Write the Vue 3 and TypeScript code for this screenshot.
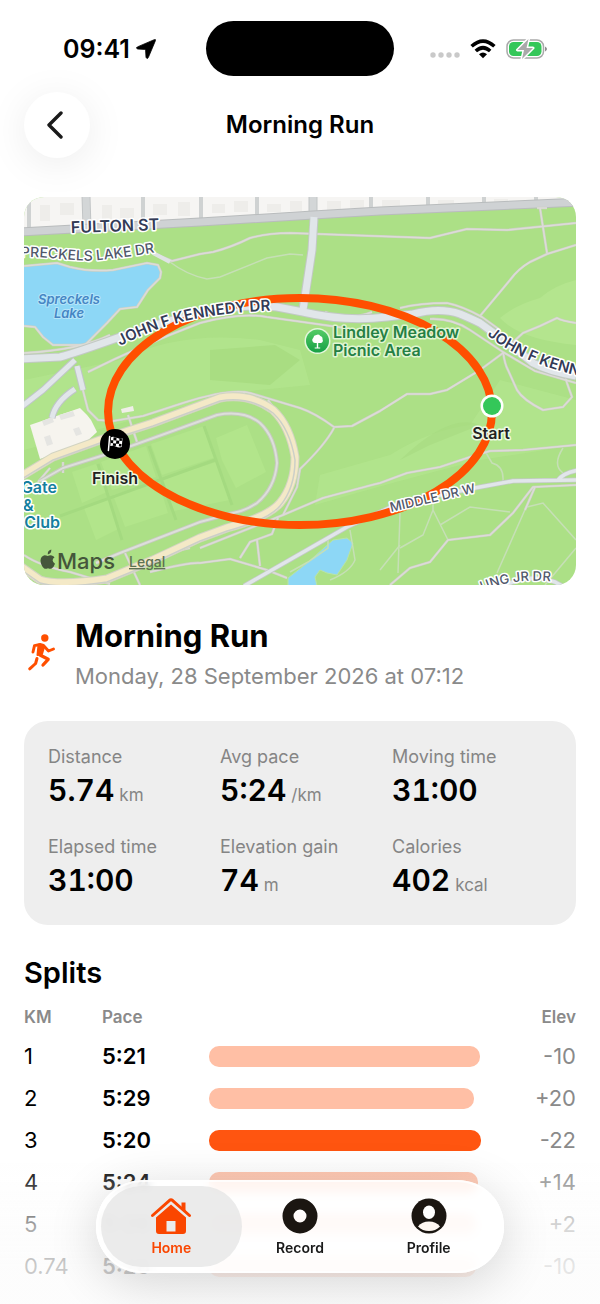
<script setup lang="ts">
interface Stat {
  label: string
  value: string
  unit?: string
}

interface Split {
  km: string
  pace: string
  seconds: number
  elev: string
}

const stats: Stat[] = [
  { label: 'Distance', value: '5.74', unit: 'km' },
  { label: 'Avg pace', value: '5:24', unit: '/km' },
  { label: 'Moving time', value: '31:00' },
  { label: 'Elapsed time', value: '31:00' },
  { label: 'Elevation gain', value: '74', unit: 'm' },
  { label: 'Calories', value: '402', unit: 'kcal' },
]

const splits: Split[] = [
  { km: '1', pace: '5:21', seconds: 321, elev: '-10' },
  { km: '2', pace: '5:29', seconds: 329, elev: '+20' },
  { km: '3', pace: '5:20', seconds: 320, elev: '-22' },
  { km: '4', pace: '5:24', seconds: 324, elev: '+14' },
  { km: '5', pace: '5:26', seconds: 326, elev: '+2' },
  { km: '0.74', pace: '5:26', seconds: 326, elev: '-10' },
]

const fastest = Math.min(...splits.map((s) => s.seconds))

const barWidth = (s: Split): string => `${((fastest / s.seconds) * 100).toFixed(1)}%`

const crossStreets: number[] = [29, 143, 201, 257, 371, 428, 484, 536]

const fultonY = (x: number): number => Math.round(231 - (x - 24) * 0.053)

const footpaths: string[] = [
  'M153 253L172 261L200 254L213 252Q232 247 250 238Q268 233 290 233L430 238L467 229L507 230L576 223',
  'M537 208h10M540 208L547 253M576 245L547 254L530 262Q518 269 510 280L480 316',
  'M576 323Q562 321 557 318L540 326L523 333L512 343',
  'M503 352Q505 365 508 370L517 390Q523 400 543 410L563 407L572 397L567 383L565 376',
  'M503 353L480 370L447 390L430 394L407 394L380 411L352 426L334 427Q315 413 300 408L250 393Q230 388 183 403L143 416L113 421L98 420L88 410L77 367',
  'M400 308Q420 303 447 303Q462 306 482 317L500 330',
  'M88 372Q140 346 200 323Q240 312 267 317L317 324L345 328',
  'M430 319Q452 318 470 330L503 352L535 371L576 383',
  'M325 312Q350 321 372 312',
  'M24 266L57 263L70 267Q90 272 113 270L147 263L158 265L161 272L160 278L148 290L137 307L120 309L107 323L85 345L53 345L43 337L35 327L24 326',
  'M24 353Q80 350 110 335',
  'M200 548L283 515L323 498Q360 488 380 483L407 473L440 467L470 457L490 451L523 450L576 445',
  'M334 428Q325 445 300 469L297 487L283 515M268 400L282 420L295 445',
  'M150 572Q190 562 200 563L230 559L267 570L287 578M240 558L250 542L272 534L278 518M257 540L260 566',
  'M390 585L410 568L430 562L448 540L490 535L513 513L533 487L576 485M535 487L525 510',
  'M24 555Q40 566 70 572L110 584M125 553L140 585M50 468L38 482M63 473V462M244 392V400M128 415L138 445M142 562Q160 554 190 548',
]

const lightPaths: string[] = [
  'M170 262Q187 275 207 279L220 277L267 258L290 254L303 255',
  'M497 573L535 487M527 507L543 503L576 540M433 500V510L448 540M440 525L470 507L510 512M400 513L398 573M400 548L423 535L433 510',
  'M485 451L492 463Q504 466 503 481M563 448Q552 465 563 473M328 540V548L308 562L290 572M350 530L355 560Q350 572 330 580',
  'M545 585L576 548M380 570L400 545',
]

const majorRoad =
  'M20 359L60 357Q75 353 120 337L165 322L200 314Q240 303 277 307L303 312Q345 322 387 317L413 314Q440 307 460 314Q472 319 480 323L513 347L533 363Q550 372 576 376'
const track =
  'M20 477L53 457L100 440L153 423L220 398Q250 393 273 410Q290 426 295 457Q295 485 280 503Q268 517 227 528L200 538L153 560L107 579Q60 586 40 580L20 566'
const innerTrack =
  'M40 481L63 468L120 450L170 432L217 415Q244 410 260 423Q275 437 277 463Q275 488 257 503Q245 511 233 513L200 522L120 553L96 563'
</script>

<template>
  <div class="screen">
    <div class="status">
      <div class="status-left">
        <span>09:41</span>
        <svg width="20" height="20" viewBox="0 0 20 20" aria-hidden="true">
          <path d="M18.200.7Q20-.1 19.400 1.700L12.300 18.600Q11 20.700 10 18.300L9.600 11.200Q9.500 10.500 8.800 10.400L1.700 10Q-.7 9.200 1.400 7.900Z" stroke="#000" stroke-width=".8" />
        </svg>
      </div>
      <div class="island"></div>
      <div class="status-right">
        <svg width="30" height="8" viewBox="0 0 30 8" fill="#c9c9c9" aria-hidden="true">
          <circle cx="3" cy="3" r="2.700" /><circle cx="11" cy="3" r="2.700" /><circle cx="19" cy="3" r="2.700" /><circle cx="27" cy="3" r="2.700" />
        </svg>
        <svg width="26" height="20" viewBox="0 0 26 20" fill="none" stroke="#000" stroke-width="3.600" aria-hidden="true">
          <path d="M1.600 7.300Q13-3.200 24.400 7.300" />
          <path d="M5.800 12Q13 5.500 20.200 12" />
          <path d="M9 15.200Q13 11.800 17 15.200L13 19.200Z" fill="#000" stroke="none" />
        </svg>
        <svg width="42" height="22" viewBox="0 0 42 22" aria-hidden="true">
          <rect x="1" y="2" width="36.500" height="18" rx="6.500" fill="#fff" stroke="#a9a9a9" stroke-width="1.500" />
          <rect x="3" y="4" width="32.500" height="14" rx="4.500" fill="#34c759" />
          <path d="M39 8.500Q43 11 39 13.500Z" fill="#8d8d8d" />
          <path d="M22.500 1L11.500 12H18L16 21L27 10H20.500Z" fill="#a9a9a9" stroke="#fff" stroke-width="3" stroke-linejoin="round" paint-order="stroke" />
        </svg>
      </div>
    </div>

    <header class="nav">
      <button class="back" type="button" aria-label="Back">
        <svg width="20" height="28" viewBox="0 0 20 28" fill="none" stroke="#1a1a1a" stroke-width="3.400" stroke-linecap="round" stroke-linejoin="round" aria-hidden="true">
          <path d="M16 2L4 14L16 26" />
        </svg>
      </button>
      <h1>Morning Run</h1>
    </header>

    <main>
      <div class="map">
        <svg viewBox="24 197 552 388" role="img" aria-label="Route map">
          <defs>
            <linearGradient id="pinGreen" x1="0" y1="0" x2="0" y2="1">
              <stop offset="0" stop-color="#55cc66" /><stop offset="1" stop-color="#16a045" />
            </linearGradient>
            <path id="lbl-preckels" d="M12 258C45 254 70 263 100 260Q130 257 162 251" />
            <path id="lbl-jfk" d="M120 346Q165 323 205 317Q240 311 285 310" />
            <path id="lbl-jfk2" d="M487 335Q525 365 585 377" />
            <path id="lbl-mlk" d="M482 591Q520 575 570 584" />
          </defs>

          <rect x="24" y="197" width="552" height="388" fill="#ace086" />
          <g fill="#b4e58e">
            <path d="M24 380L120 360Q180 330 260 340L300 350L310 385L240 392L150 415L24 450Z" opacity=".7" />
            <path d="M576 280Q555 285 540 298Q515 305 500 318Q520 340 576 345Z" />
            <path d="M320 475L390 455Q430 430 470 425L500 380L576 400V445L480 460Q400 480 315 505Z" opacity=".7" />
            <path d="M210 350L275 345L300 360L270 385L210 380Z" fill="#a9dd82" />
          </g>
          <path d="M400 460Q450 412 480 425L430 445Z" fill="#a7db80" opacity=".6" />

          <path d="M24 197H576V202L313 214L24 231Z" fill="#f6f5f3" />
          <path
            d="M40 205h10v16h-10zM60 203h14v12h-14zM102 205h10v14h-10zM120 208h14v10h-14zM153 204h14v11h-14zM178 202h12v14h-12zM212 204h13v9h-13zM234 201h14v11h-14zM267 204h14v8h-14zM290 201h12v10h-12zM327 201h14v9h-14zM350 200h14v8h-14zM382 200h18v7h-18zM438 200h16v5h-16zM494 199h14v4h-14z"
            fill="#eeedea"
          />
          <g fill="none" stroke="#cfd2d2" stroke-width="4">
            <path v-for="x in crossStreets" :key="x" :d="`M${x} 196V${fultonY(x)}`" />
          </g>
          <path d="M86 196L87 228M313 196V216" stroke="#c2c5c6" stroke-width="9" />
          <path d="M86 196L87 228M313 196V216" stroke="#d3d6d7" stroke-width="7" />
          <path d="M20 232L200 222L313 215L380 211L580 202" fill="none" stroke="#b9bcbd" stroke-width="9" />
          <path d="M20 232L200 222L313 215L380 211L580 202" fill="none" stroke="#cfd2d4" stroke-width="7" />

          <path d="M24 266L57 263L70 267Q90 272 113 270L147 263L158 265L161 272L160 278L148 290L137 307L120 309L107 323L85 345L53 345L43 337L35 327L24 326Z" fill="#8dd7f6" />
          <path d="M288 578L307 563L333 540L347 538L353 543L347 560L337 575L327 573L320 570L315 577L317 586H288Z" fill="#8dd7f6" stroke="#b9e4a6" />

          <g fill="#b2e58b">
            <path d="M72 472L96 464L107 492L82 503ZM101 462L146 446L156 477L112 490ZM151 444L204 426L216 457L162 475ZM216 438L247 425L266 472L236 488L222 460ZM84 508L108 498L120 528L96 540ZM113 495L158 481L168 513L125 527ZM163 479L216 462L230 500L174 511Z" />
          </g>
          <g fill="none" stroke="#a4da80" stroke-width="3">
            <path d="M60 516L215 460M149 446L176 520M98 464L122 540M204 426L232 505" />
          </g>

          <path d="M30 425L80 408L87 415L91 420L97 432L84 444L40 459Z" fill="#f6f4ee" />
          <path d="M42 421l10-4 2 5-10 4zM59 415l14-4 2 5-14 4zM44 437l6-2 3 9-6 2zM73 429l6-2 3 7-6 2z" fill="#e5e5e2" />
          <path d="M121 409l12-3 1 5-12 2z" fill="#f0eee9" />

          <g fill="none" stroke="#c6dfb6" stroke-width="1.500">
            <path v-for="d in lightPaths" :key="d" :d="d" />
          </g>
          <g fill="none" stroke="#cbcfc4" stroke-width="2.600" stroke-linejoin="round">
            <path v-for="d in footpaths" :key="d" :d="d" />
          </g>
          <g fill="none" stroke="#dddcd7" stroke-width="1.500" stroke-linejoin="round">
            <path v-for="d in footpaths" :key="d" :d="d" />
          </g>

          <g fill="none" stroke-linejoin="round">
            <path :d="track" stroke="#d2d4c2" stroke-width="9" />
            <path :d="track" stroke="#f4e9c7" stroke-width="7" />
            <path :d="track" stroke="#cccfc8" stroke-width="1.500" transform="translate(0 3)" />
            <path :d="innerTrack" stroke="#c5cabd" stroke-width="4" />
            <path :d="innerTrack" stroke="#dddfdb" stroke-width="2" />
            <path d="M153 253L170 262" stroke="#dfe3e4" stroke-width="4" />
            <path d="M75 360L43 390L20 408M77 366L83 390M75 389Q55 402 52 418" stroke="#bfc5c8" stroke-width="7" />
            <path d="M314 219L312 250L309 270L303 308" stroke="#c2c9c4" stroke-width="9" />
            <path :d="majorRoad" stroke="#c2c9c4" stroke-width="9" />
            <path d="M75 360L43 390L20 408M77 366L83 390M75 389Q55 402 52 418" stroke="#e1e6ea" stroke-width="5" />
            <path d="M314 217L312 250L309 270L303 310" stroke="#e1e6ea" stroke-width="7" />
            <path :d="majorRoad" stroke="#e1e6ea" stroke-width="7" />
            <path d="M244 586L347 527L400 503L480 487L513 481L580 480M557 481Q564 472 580 470M500 588Q528 572 555 582L566 588" stroke="#c2c9c4" stroke-width="5" />
            <path d="M244 586L347 527L400 503L480 487L513 481L580 480M557 481Q564 472 580 470M500 588Q528 572 555 582L566 588" stroke="#e1e6ea" stroke-width="3.500" />
          </g>

          <ellipse cx="300" cy="411.500" rx="192" ry="113.500" fill="none" stroke="#ff4f00" stroke-width="8" />

          <g class="road">
            <text x="71" y="233" font-size="16" transform="rotate(-2 71 233)">FULTON ST</text>
            <text font-size="15"><textPath href="#lbl-jfk">JOHN F KENNEDY DR</textPath></text>
            <text font-size="15"><textPath href="#lbl-jfk2">JOHN F KENN</textPath></text>
          </g>
          <g class="road minor">
            <text font-size="14"><textPath href="#lbl-preckels">SPRECKELS LAKE DR</textPath></text>
            <text x="391" y="512" font-size="13" transform="rotate(-13 391 512)">MIDDLE DR W</text>
            <text font-size="13"><textPath href="#lbl-mlk">UNG JR DR</textPath></text>
          </g>
          <g class="lake">
            <text x="69" y="304">Spreckels</text>
            <text x="69" y="318">Lake</text>
          </g>
          <g class="club">
            <text x="57" y="493">Gate</text>
            <text x="23" y="511" class="start">&amp;</text>
            <text x="60" y="528">Club</text>
          </g>
          <g class="park">
            <circle cx="317.500" cy="341" r="13" fill="#e4f6dc" />
            <circle cx="317.500" cy="341" r="11.500" fill="url(#pinGreen)" />
            <path d="M316.800 347.500V343h-1.800a3 3 0 0 1-1.700-5.300 3.200 3.200 0 0 1 3-2.800 3.200 3.200 0 0 1 4 1 3 3 0 0 1 2.200 3.300 2.500 2.500 0 0 1-1.500 3.800h-2.800v4.500h2v1h-5.500v-1z" fill="#fff" />
            <text x="333" y="338">Lindley Meadow</text>
            <text x="333" y="356">Picnic Area</text>
          </g>

          <circle cx="492" cy="406" r="11.500" fill="#fff" />
          <circle cx="492" cy="406" r="9" fill="#34c759" />
          <circle cx="115" cy="444" r="15" fill="#000" />
          <g transform="rotate(5 115 444)">
            <path d="M109 437V451" stroke="#fff" stroke-width="1.500" stroke-linecap="round" />
            <path d="M110.500 437.500Q113 436.500 116 437.700T122 437.500V446.500Q119 447.700 116 446.500T110.500 446.500Z" fill="#fff" />
            <path d="M113 437.300h3v3h-3zM119 438h2.500v2.500h-2.500zM116 440.500h3v3h-3zM110.700 440.500h2.300v2.800h-2.300zM113 443.300h3v2.700h-3zM119 443.500h2.500v2.500h-2.500z" fill="#000" />
          </g>
          <g class="marker">
            <text x="491" y="439">Start</text>
            <text x="115" y="484">Finish</text>
          </g>

          <g class="credit">
            <path d="M47.800 554.500Q47.300 550.700 51.300 549.500Q51.700 553.500 47.800 554.500ZM44.500 555.200Q46.500 555.200 47.700 556Q49.800 554.900 51.800 555.400Q53.600 555.900 54.500 557.200Q50.500 560.200 55 563.800Q53.900 567.200 51.600 568.600Q50.100 569.200 48 568.200Q45.800 569.200 44.200 568.500Q40.800 565.500 40.500 560.500Q40.800 556 44.500 555.200Z" />
            <text x="57" y="569">Maps</text>
          </g>
          <a href="#legal"><text x="129" y="567" class="legal">Legal</text></a>
        </svg>
      </div>

      <section class="activity">
        <svg class="runner" width="30" height="44" viewBox="27 633 30 44" fill="none" stroke="#ff4f00" stroke-linecap="round" stroke-linejoin="round" aria-hidden="true">
          <circle cx="44.800" cy="638" r="3.700" fill="#ff4f00" stroke="none" />
          <path d="M33 652L34.500 645.700L40 644.500L43.500 645.500L48.500 651L53.500 649" stroke-width="2.900" />
          <path d="M38.500 644.800L44.200 646.500L42 654L37.500 655Z" fill="#ff4f00" stroke-width="2" />
          <path d="M40 655L48.200 659.300L43 665" stroke-width="3.300" />
          <path d="M37 658.500L35.600 663.500L29.700 668.800" stroke-width="3" />
        </svg>
        <div>
          <h2>Morning Run</h2>
          <p>Monday, 28 September 2026 at 07:12</p>
        </div>
      </section>

      <dl class="stats">
        <div v-for="s in stats" :key="s.label">
          <dt>{{ s.label }}</dt>
          <dd>{{ s.value }}<small v-if="s.unit">{{ s.unit }}</small></dd>
        </div>
      </dl>

      <section class="splits">
        <h3 id="splits-title">Splits</h3>
        <table aria-labelledby="splits-title">
          <thead>
            <tr>
              <th class="km" scope="col">KM</th>
              <th class="pace" scope="col">Pace</th>
              <td></td>
              <th class="elev" scope="col">Elev</th>
            </tr>
          </thead>
          <tbody>
            <tr v-for="s in splits" :key="s.km">
              <td>{{ s.km }}</td>
              <td class="pace">{{ s.pace }}</td>
              <td><div class="bar" :class="{ best: s.seconds === fastest }" :style="{ width: barWidth(s) }"></div></td>
              <td class="elev">{{ s.elev }}</td>
            </tr>
          </tbody>
        </table>
      </section>
    </main>

    <div class="fade"></div>
    <nav class="tabs" aria-label="Main">
      <button class="tab active" type="button" aria-current="page">
        <svg width="42" height="38" viewBox="0 0 42 38" aria-hidden="true">
          <path d="M2.500 18.500L19.600 3.300Q21 2.200 22.400 3.300L39.500 18.500" fill="none" stroke="#fa4600" stroke-width="3" stroke-linecap="round" stroke-linejoin="round" />
          <path d="M31.500 5.500h4v9l-4-3.500z" fill="#fa4600" />
          <path fill-rule="evenodd" d="M21 7.500L36 20.500V34Q36 37 33 37H9Q6 37 6 34V20.500ZM16.500 24V34.500H25.500V24Z" fill="#fa4600" />
        </svg>
        Home
      </button>
      <button class="tab" type="button">
        <svg width="42" height="38" viewBox="0 0 42 38" aria-hidden="true">
          <circle cx="21" cy="19" r="12" fill="none" stroke="#1b1611" stroke-width="11" />
        </svg>
        Record
      </button>
      <button class="tab" type="button">
        <svg width="42" height="38" viewBox="0 0 42 38" aria-hidden="true">
          <circle cx="21" cy="19" r="17.500" fill="#1b1611" />
          <ellipse cx="21" cy="15.300" rx="6" ry="6.800" fill="#fff" />
          <path d="M10 29.500Q14 24.500 21 24.500T32 29.500Q27.500 34 21 34T10 29.500Z" fill="#fff8f2" />
        </svg>
        Profile
      </button>
    </nav>
  </div>
</template>

<style>
body {
  margin: 0;
  background: #fff;
}
</style>

<style scoped>
.screen {
  box-sizing: border-box;
  min-height: 100vh;
  padding: 21px 0 16px;
  overflow: hidden;
  font-family: Inter, 'Liberation Sans', sans-serif;
  color: #000;
  background: #fff;
}
h1, h2, h3, p, dl, dd {
  margin: 0;
}
button {
  font: inherit;
  border: 0;
  cursor: pointer;
}
.status {
  display: grid;
  grid-template-columns: 1fr 188px 1fr;
  align-items: center;
  height: 55px;
}
.status-left {
  display: flex;
  align-items: center;
  gap: 6px;
  padding-left: 63px;
  font-size: 25px;
  font-weight: 600;
}
.island {
  height: 55px;
  border-radius: 28px;
  background: #000;
}
.status-right {
  display: flex;
  align-items: center;
  justify-content: flex-end;
  gap: 10px;
  padding-right: 52px;
}
.status-right svg:first-child {
  align-self: flex-end;
}
.nav {
  display: grid;
  grid-template-columns: 66px 1fr 66px;
  align-items: center;
  padding: 16px 24px 0;
}
.back {
  display: grid;
  place-items: center;
  height: 66px;
  padding: 0 4px 0 0;
  border-radius: 50%;
  background: #fff;
  box-shadow: 0 6px 40px rgba(0, 0, 0, 0.08);
}
h1 {
  font-size: 24px;
  line-height: 32px;
  font-weight: 600;
  text-align: center;
}
main {
  padding: 39px 24px 0;
}
.map {
  overflow: hidden;
  border-radius: 20px;
}
.map svg {
  display: block;
  width: 100%;
}
.map text {
  paint-order: stroke;
  stroke: #fff;
  stroke-width: 3px;
  stroke-linejoin: round;
}
.map .road {
  font-weight: 600;
  fill: #333b57;
}
.map .minor {
  font-weight: 500;
  fill: #51586b;
}
.map .lake text {
  font-size: 13px;
  font-weight: 600;
  font-style: italic;
  text-anchor: middle;
  fill: #4586c4;
  stroke: #b5e5fa;
  stroke-width: 2px;
}
.map .club text {
  font-size: 16px;
  font-weight: 600;
  text-anchor: end;
  fill: #157f9e;
}
.map .club .start {
  text-anchor: start;
}
.map .park text {
  font-size: 16px;
  font-weight: 600;
  fill: #258044;
  stroke: #e0f5d2;
}
.map .marker text {
  font-size: 16px;
  font-weight: 600;
  text-anchor: middle;
  fill: #222;
  stroke: #edf9e4;
}
.map .credit {
  fill: #45563b;
}
.map .credit text {
  font-size: 22px;
  font-weight: 500;
  stroke: none;
}
.map .legal {
  font-size: 14px;
  font-weight: 500;
  text-decoration: underline;
  fill: #5d7151;
  stroke: none;
}
.activity {
  display: flex;
  align-items: center;
  gap: 18px;
  padding: 30px 3px 0;
}
.runner {
  flex: none;
}
h2 {
  font-size: 31px;
  line-height: 42px;
  font-weight: 700;
}
.activity p {
  font-size: 22px;
  line-height: 38px;
  color: #8a8a8a;
}
.stats {
  display: grid;
  grid-template-columns: repeat(3, 1fr);
  gap: 24px 12px;
  margin-top: 26px;
  padding: 24px;
  border-radius: 24px;
  background: #eee;
}
dt {
  font-size: 18px;
  line-height: 24px;
  color: #858585;
}
dd {
  font-size: 30px;
  line-height: 42px;
  font-weight: 600;
  font-variant-numeric: tabular-nums;
}
small {
  margin-left: 5px;
  font-size: 17px;
  line-height: 1;
  font-weight: 400;
  color: #858585;
}
.splits {
  padding-top: 28px;
}
h3 {
  font-size: 29px;
  line-height: 40px;
  font-weight: 600;
}
table {
  width: 100%;
  margin-top: 6px;
  border-collapse: collapse;
  table-layout: fixed;
}
th, td {
  height: 42px;
  padding: 0;
  font-size: 22px;
  font-weight: 400;
  text-align: left;
}
thead th, thead td {
  height: 36px;
  font-size: 17px;
  font-weight: 600;
  color: #8a8a8a;
}
.km {
  width: 78px;
}
.pace {
  width: 107px;
}
tbody .pace {
  font-weight: 600;
}
.elev {
  width: 95px;
  text-align: right;
  color: #8a8a8a;
}
.bar {
  height: 21px;
  border-radius: 10px;
  background: #ffbfa5;
}
.bar.best {
  background: #ff5510;
}
.fade {
  position: fixed;
  right: 0;
  bottom: 0;
  left: 0;
  height: 150px;
  background: linear-gradient(rgba(252, 252, 252, 0), rgba(252, 252, 252, 0.3) 25%, rgba(252, 252, 252, 0.68) 50%, rgba(252, 252, 252, 0.8) 75%);
}
.tabs {
  position: fixed;
  bottom: 31px;
  left: 50%;
  display: grid;
  grid-template-columns: repeat(3, 1fr);
  box-sizing: border-box;
  width: 408px;
  max-width: 100%;
  padding: 6px 11px;
  border-radius: 47px;
  background: rgba(255, 255, 255, 0.8);
  box-shadow: 0 10px 50px rgba(0, 0, 0, 0.16), inset 0 0 0 2px rgba(255, 255, 255, 0.8);
  backdrop-filter: blur(4px);
  transform: translateX(-50%);
}
.tab {
  display: flex;
  flex-direction: column;
  align-items: center;
  gap: 3px;
  height: 81px;
  margin: 0 -6px;
  padding: 11px 0 0;
  border-radius: 41px;
  font-size: 14px;
  line-height: 20px;
  font-weight: 600;
  color: #1a1a1a;
  background: transparent;
}
.tab.active {
  color: #fa4600;
  background: rgba(228, 228, 228, 0.75);
}
</style>
